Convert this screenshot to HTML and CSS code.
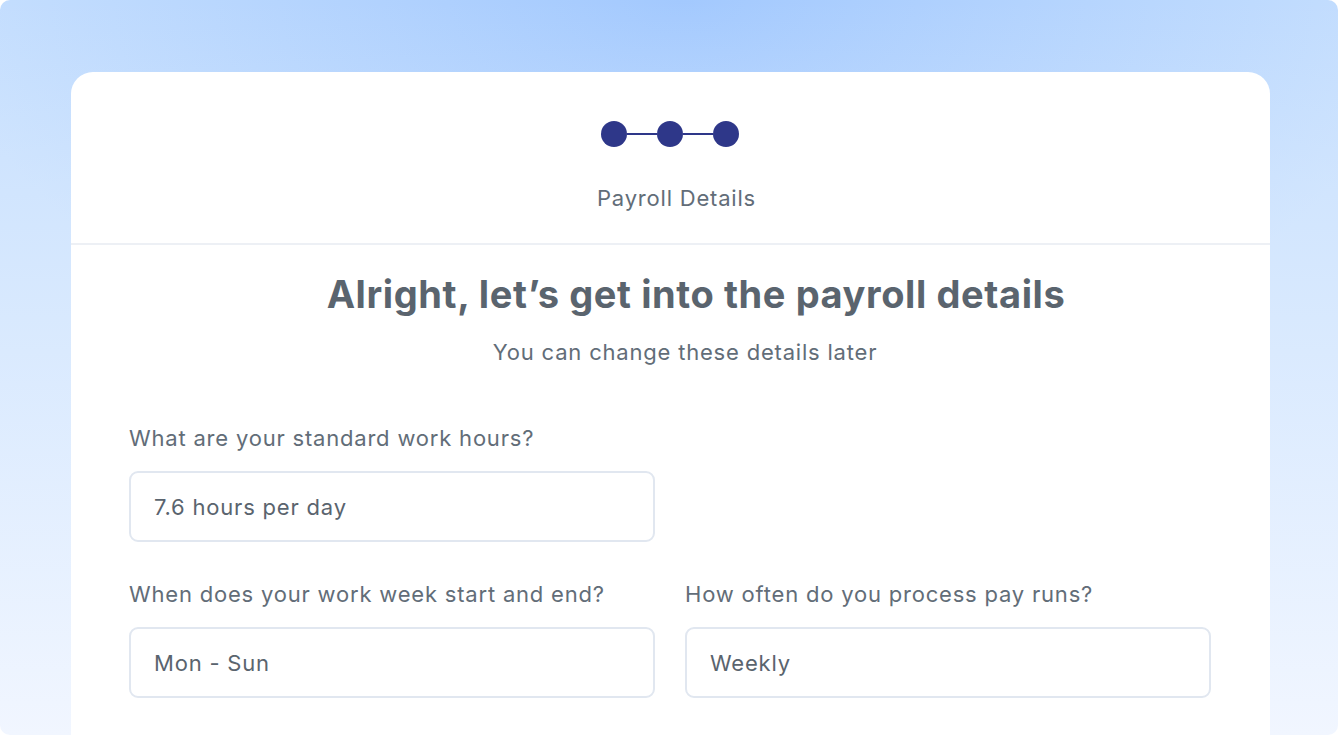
FILE: index.html
```html
<!DOCTYPE html>
<html lang="en">
<head>
    <meta charset="UTF-8">
    <meta name="viewport" content="width=device-width, initial-scale=1.0">
    <title>Payroll Details</title>
    <link rel="stylesheet" href="styles.css">
</head>
<body>
    <div class="frame">
        <div class="card">
            <div class="card-header">
                <div class="stepper">
                    <span class="dot"></span>
                    <span class="line"></span>
                    <span class="dot"></span>
                    <span class="line"></span>
                    <span class="dot"></span>
                </div>
                <p class="step-name">Payroll Details</p>
            </div>
            <div class="card-body">
                <h1>Alright, let’s get into the payroll details</h1>
                <p class="subtitle">You can change these details later</p>

                <div class="form-row first">
                    <div class="field">
                        <label>What are your standard work hours?</label>
                        <div class="input">7.6 hours per day</div>
                    </div>
                    <div class="field"></div>
                </div>
                <div class="form-row">
                    <div class="field">
                        <label>When does your work week start and end?</label>
                        <div class="input">Mon - Sun</div>
                    </div>
                    <div class="field">
                        <label>How often do you process pay runs?</label>
                        <div class="input">Weekly</div>
                    </div>
                </div>
            </div>
        </div>
    </div>
</body>
</html>
```

FILE: styles.css
```css
html, body {
    margin: 0;
    padding: 0;
    background: #fff;
}
body {
    font-family: Inter, "Noto Sans", sans-serif;
    overflow: hidden;
}
.frame {
    height: 735px;
    border-radius: 10px;
    overflow: hidden;
    box-sizing: border-box;
    padding: 72px 68px 0 71px;
    background:
        linear-gradient(180deg, rgba(240, 246, 255, 0) 0%, rgba(240, 246, 255, 0.55) 55%, rgba(241, 246, 255, 1) 100%),
        radial-gradient(ellipse 55% 55% at 51% 0%, #a3c9fe 0%, #b6d5fe 55%, #c6dffe 100%);
}
.card {
    background: #fff;
    border-radius: 22px 22px 0 0;
    height: 700px;
}
.card-header {
    display: flex;
    flex-direction: column;
    align-items: center;
    padding-top: 49px;
    border-bottom: 2px solid #edf0f5;
    height: 122px;
}
.stepper {
    display: flex;
    align-items: center;
    margin-left: -2px;
}
.dot {
    width: 26px;
    height: 26px;
    border-radius: 50%;
    background: #2e3789;
}
.line {
    width: 30px;
    height: 2px;
    background: #2e3789;
}
.step-name {
    margin: 0;
    margin-top: 38px;
    font-size: 22px;
    letter-spacing: 0.8px;
    color: #626d78;
    padding-left: 12px;
}
.card-body {
    padding: 26px 59px 0 58px;
}
.card-body h1 {
    margin: 0;
    text-align: center;
    font-size: 38px;
    font-weight: 700;
    color: #5a646e;
    padding-left: 52px;
    letter-spacing: 0.6px;
}
.subtitle {
    margin: 22px 0 0;
    text-align: center;
    font-size: 22px;
    letter-spacing: 0.8px;
    color: #626d78;
    padding-left: 30px;
}
.form-row {
    display: grid;
    grid-template-columns: 1fr 1fr;
    gap: 30px;
    margin-top: 39px;
}
.form-row.first {
    margin-top: 60px;
}
.field label {
    display: block;
    font-size: 22px;
    letter-spacing: 0.8px;
    color: #626d78;
    margin-bottom: 19px;
    line-height: 27px;
}
.input {
    height: 71px;
    box-sizing: border-box;
    border: 2px solid #e1e7f0;
    border-radius: 9px;
    padding: 0 23px;
    display: flex;
    align-items: center;
    font-size: 22px;
    letter-spacing: 0.8px;
    color: #5a646e;
}
```
